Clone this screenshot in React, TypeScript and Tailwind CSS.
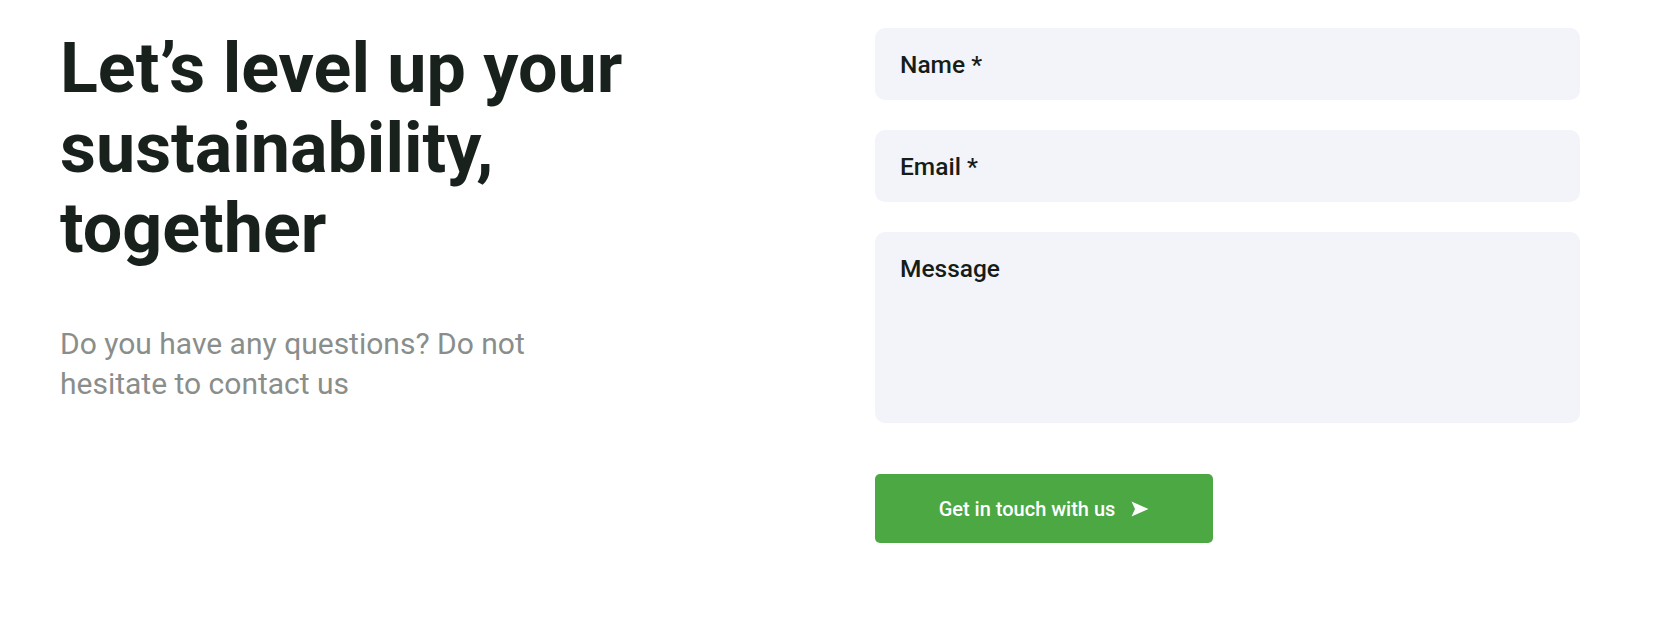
import { useState } from 'react'

function SendIcon() {
  return (
    <svg width="18" height="16" viewBox="0 0 18 16" fill="currentColor" aria-hidden="true">
      <path d="M0.5 0.5 L17.5 8 L0.5 15.5 L4 8 Z" />
    </svg>
  )
}

export default function App() {
  const [name, setName] = useState('')
  const [email, setEmail] = useState('')
  const [message, setMessage] = useState('')

  const fieldClass =
    'w-full rounded-[10px] bg-[#f3f4f9] pl-[25px] pr-6 text-[24.5px] font-medium text-[#161d18] placeholder:text-[#161d18] outline-none'

  return (
    <div className="flex h-[621px] bg-white pl-[60px] pt-[28px] font-['Roboto',sans-serif]">
      <div className="flex-1">
        <h1 className="max-w-[640px] text-[70px] font-bold leading-[80px] text-[#18211b]">
          Let’s level up your sustainability, together
        </h1>
        <p className="mt-[56px] max-w-[500px] text-[30px] leading-[40px] text-[#8a8e8b]">
          Do you have any questions? Do not hesitate to contact us
        </p>
      </div>

      <form onSubmit={(e) => e.preventDefault()} className="mr-[92px] flex w-[705px] flex-col">
        <input
          type="text"
          value={name}
          onChange={(e) => setName(e.target.value)}
          placeholder="Name *"
          className={`${fieldClass} h-[72px]`}
        />
        <input
          type="email"
          value={email}
          onChange={(e) => setEmail(e.target.value)}
          placeholder="Email *"
          className={`${fieldClass} mt-[30px] h-[72px]`}
        />
        <textarea
          value={message}
          onChange={(e) => setMessage(e.target.value)}
          placeholder="Message"
          className={`${fieldClass} mt-[30px] h-[191px] resize-none pt-[19px] leading-[36px]`}
        />
        <button
          type="submit"
          className="mt-[51px] flex h-[69px] w-[338px] items-center justify-center gap-4 rounded-[5px] bg-[#4ba843] text-[20px] font-medium text-white"
        >
          Get in touch with us
          <SendIcon />
        </button>
      </form>
    </div>
  )
}
